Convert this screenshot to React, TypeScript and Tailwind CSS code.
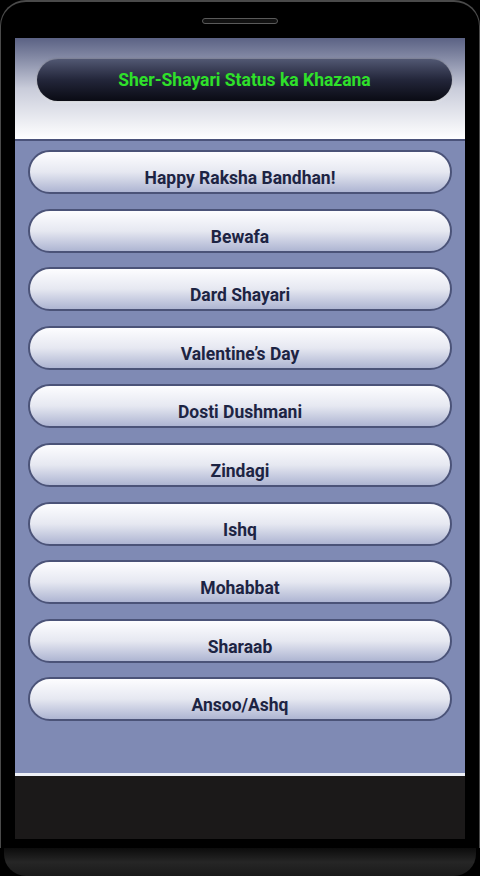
const items = [
  "Happy Raksha Bandhan!",
  "Bewafa",
  "Dard Shayari",
  "Valentine’s Day",
  "Dosti Dushmani",
  "Zindagi",
  "Ishq",
  "Mohabbat",
  "Sharaab",
  "Ansoo/Ashq",
];

export default function App() {
  return (
    <div className="h-[876px] w-[480px] overflow-hidden bg-black font-['Roboto',sans-serif]">
      {/* phone body */}
      <div className="flex h-[848px] flex-col rounded-t-[26px] border-t-2 border-x border-[#4a4a4a] bg-black px-[14px]">
        {/* speaker */}
        <div className="flex h-[36px] items-center justify-center">
          <div className="mt-[2px] h-[6px] w-[76px] rounded-full border border-[#5a5a5a] bg-[#111]" />
        </div>

        {/* screen */}
        <div className="flex flex-col">
          <div className="flex h-[101px] flex-col bg-gradient-to-b from-[#5b6284] via-[#c9ccda] to-white pl-[22px] pr-[13px] pt-[21px]">
            <div className="flex h-[42px] items-center justify-center rounded-full bg-gradient-to-b from-[#525873] via-[#23263a] to-[#0a0b14] shadow-[0_1px_3px_rgba(255,255,255,0.7),0_0_2px_rgba(0,0,0,0.6)]">
              <span className="text-[17.5px] font-bold leading-[20px] text-[#2fe02a]">
                Sher-Shayari Status ka Khazana
              </span>
            </div>
          </div>
          <div className="h-[2px] bg-[#4b537a]" />
          <div className="flex h-[632px] flex-col gap-[14.6px] bg-[#7f8ab4] px-[13px] pt-[9px]">
            {items.map((t) => (
              <div
                key={t}
                className="flex h-[44px] items-end justify-center rounded-full border-2 border-[#4b5378] bg-gradient-to-b from-[#fdfdff] via-[#e6e8f1] to-[#aeb5d2] pb-[4px]"
              >
                <span className="text-[17.5px] font-bold leading-[20px] text-[#1d2443]">{t}</span>
              </div>
            ))}
          </div>
          <div className="h-[3px] bg-[#eef0f6]" />
          <div className="h-[63px] bg-[#1b1919]" />
        </div>
      </div>
      {/* bottom lip */}
      <div className="mx-[4px] h-[28px] rounded-b-[22px] bg-gradient-to-b from-[#0c0c0c] via-[#262626] to-[#1a1a1a]" />
    </div>
  );
}
